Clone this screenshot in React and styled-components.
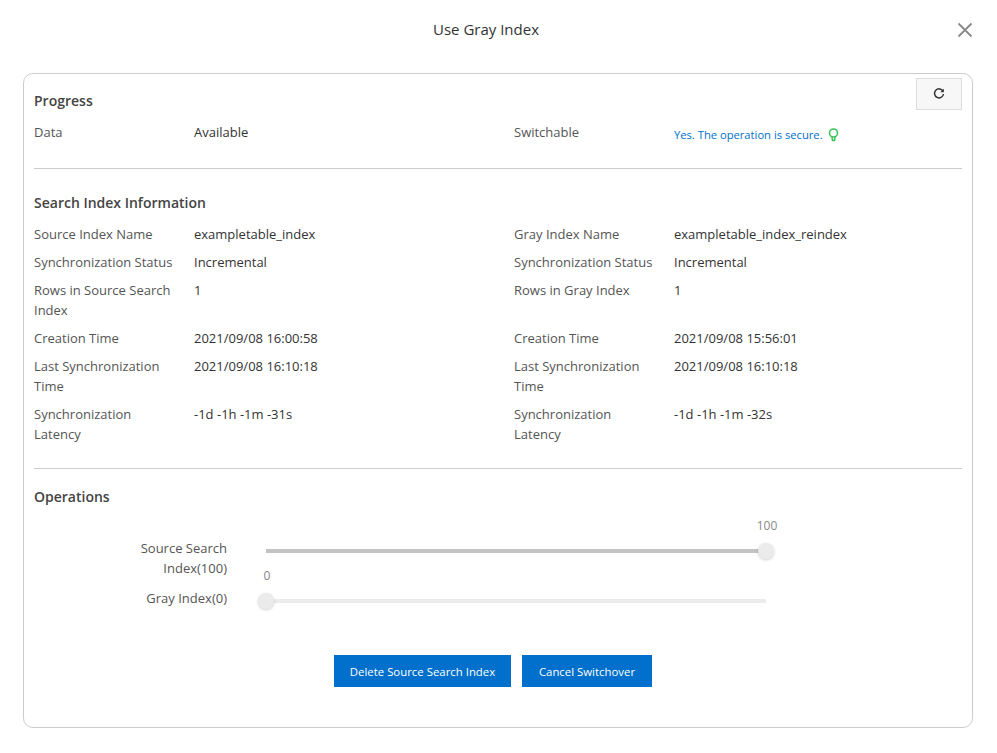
import React from 'react';
import styled, { createGlobalStyle } from 'styled-components';

const GlobalStyle = createGlobalStyle`
  body {
    margin: 0;
    background: #fff;
    font-family: "Open Sans", "Liberation Sans", sans-serif;
    font-size: 13px;
    color: #333;
  }
`;

const Page = styled.div`
  padding: 0 24px 25px 23px;
`;

const Header = styled.div`
  position: relative;
  height: 73px;
  padding: 19px 24px 0 0;
  box-sizing: border-box;
  text-align: center;
  font-size: 15px;
  line-height: 20px;
  color: #333;
`;

const CloseButton = styled.button`
  position: absolute;
  top: 22px;
  right: 0;
  width: 16px;
  height: 16px;
  padding: 0;
  border: 0;
  background: none;
  color: #888;
  display: flex;
`;

const Card = styled.div`
  position: relative;
  height: 655px;
  box-sizing: border-box;
  padding: 17px 10px 0;
  border: 1px solid #ccc;
  border-radius: 10px;
`;

const RefreshButton = styled.button`
  position: absolute;
  top: 4px;
  right: 10px;
  width: 46px;
  height: 32px;
  padding: 0;
  border: 1px solid #ddd;
  background: #f7f7f7;
  color: #333;
  display: flex;
  align-items: center;
  justify-content: center;
`;

const SectionTitle = styled.div`
  font-size: 14px;
  font-weight: 600;
  line-height: 20px;
  color: #444;
  margin-bottom: ${p => p.$gap || 11}px;
`;

const InfoGrid = styled.div`
  display: grid;
  grid-template-columns: 160px 320px 160px 1fr;
  row-gap: 8px;
  line-height: 20px;
`;

const Label = styled.div`
  padding-right: 14px;
  color: #555;
`;

const Value = styled.div`
  color: #333;
`;

const SecureText = styled.div`
  display: flex;
  align-items: center;
  gap: 5px;
  padding-top: 3px;
  font-size: 11.2px;
  color: #0070cc;
`;

const Divider = styled.hr`
  margin: ${p => p.$top}px 0 ${p => p.$bottom}px;
  border: 0;
  border-top: 1px solid #ccc;
`;

const SliderRow = styled.div`
  display: flex;
  align-items: flex-start;
  margin-bottom: 10px;
`;

const SliderLabel = styled.div`
  width: 193px;
  padding-left: 93px;
  box-sizing: border-box;
  text-align: right;
  line-height: 20px;
  color: #555;
`;

const SliderTrack = styled.div`
  position: relative;
  width: 500px;
  height: 4px;
  margin: 11px 0 0 39px;
  background: ${p => (p.$filled ? '#c4c4c4' : '#ebebeb')};
`;

const SliderHandle = styled.div`
  position: absolute;
  top: -6px;
  left: ${p => p.$percent}%;
  width: 16px;
  height: 16px;
  margin-left: -8px;
  border-radius: 50%;
  background: #ebebeb;
  box-shadow: 0 1px 3px rgba(0, 0, 0, 0.18);
`;

const SliderValue = styled.div`
  position: absolute;
  top: -25px;
  left: 50%;
  margin-left: 1px;
  transform: translateX(-50%);
  font-size: 12px;
  line-height: 16px;
  color: #888;
`;

const ButtonRow = styled.div`
  display: flex;
  justify-content: center;
  gap: 11px;
  margin: 47px 0 0 -10px;
`;

const PrimaryButton = styled.button`
  height: 32px;
  width: ${p => p.$width}px;
  padding: 0;
  border: 0;
  background: #0070cc;
  color: #fff;
  font-family: inherit;
  font-size: 11.4px;
`;

const infoRows = [
  ['Source Index Name', 'exampletable_index', 'Gray Index Name', 'exampletable_index_reindex'],
  ['Synchronization Status', 'Incremental', 'Synchronization Status', 'Incremental'],
  ['Rows in Source Search Index', '1', 'Rows in Gray Index', '1'],
  ['Creation Time', '2021/09/08 16:00:58', 'Creation Time', '2021/09/08 15:56:01'],
  ['Last Synchronization Time', '2021/09/08 16:10:18', 'Last Synchronization Time', '2021/09/08 16:10:18'],
  ['Synchronization Latency', '-1d -1h -1m -31s', 'Synchronization Latency', '-1d -1h -1m -32s'],
];

function CloseIcon() {
  return (
    <svg width="16" height="16" viewBox="0 0 16 16" fill="none" stroke="currentColor" strokeWidth="1.8">
      <path d="M1.5 1.500l13 13M14.500 1.500l-13 13" />
    </svg>
  );
}

function RefreshIcon() {
  return (
    <svg width="12" height="12" viewBox="0 0 12 12" fill="none" stroke="currentColor" strokeWidth="1.5">
      <path d="M10 3.200A4.500 4.500 0 1 0 10.500 6" />
      <path d="M10.800 0.800v3.400H7.400" fill="currentColor" stroke="none" />
    </svg>
  );
}

function BulbIcon() {
  return (
    <svg width="11" height="14" viewBox="0 0 11 14" fill="none" stroke="#3cc45a" strokeWidth="1.6">
      <circle cx="5.500" cy="5" r="4" />
      <path d="M4 9l0.500 3.500h2L7 9" />
    </svg>
  );
}

export default function App() {
  return (
    <Page>
      <GlobalStyle />
      <Header>
        Use Gray Index
        <CloseButton aria-label="Close"><CloseIcon /></CloseButton>
      </Header>
      <Card>
        <RefreshButton aria-label="Refresh"><RefreshIcon /></RefreshButton>
        <SectionTitle>Progress</SectionTitle>
        <InfoGrid>
          <Label>Data</Label>
          <Value>Available</Value>
          <Label>Switchable</Label>
          <SecureText>Yes. The operation is secure. <BulbIcon /></SecureText>
        </InfoGrid>
        <Divider $top={23} $bottom={24} />
        <SectionTitle>Search Index Information</SectionTitle>
        <InfoGrid>
          {infoRows.map(row => row.map((text, i) => (
            i % 2 === 0
              ? <Label key={`${row[0]}-${i}`}>{text}</Label>
              : <Value key={`${row[0]}-${i}`}>{text}</Value>
          )))}
        </InfoGrid>
        <Divider $top={24} $bottom={18} />
        <SectionTitle $gap={31}>Operations</SectionTitle>
        <SliderRow>
          <SliderLabel>Source Search Index(100)</SliderLabel>
          <SliderTrack $filled>
            <SliderHandle $percent={100}><SliderValue>100</SliderValue></SliderHandle>
          </SliderTrack>
        </SliderRow>
        <SliderRow>
          <SliderLabel>Gray Index(0)</SliderLabel>
          <SliderTrack>
            <SliderHandle $percent={0}><SliderValue>0</SliderValue></SliderHandle>
          </SliderTrack>
        </SliderRow>
        <ButtonRow>
          <PrimaryButton $width={177}>Delete Source Search Index</PrimaryButton>
          <PrimaryButton $width={130}>Cancel Switchover</PrimaryButton>
        </ButtonRow>
      </Card>
    </Page>
  );
}
